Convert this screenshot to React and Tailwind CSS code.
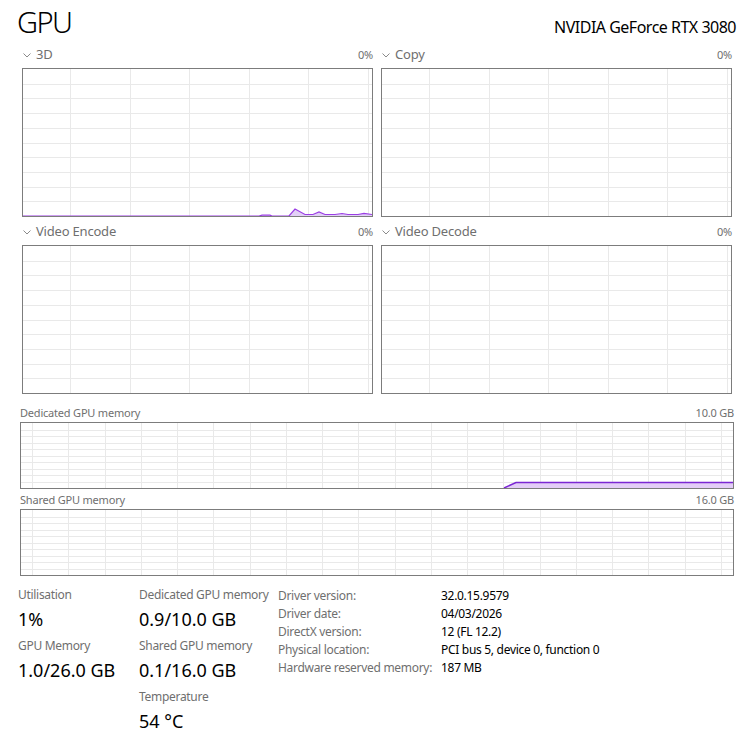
import React from "react";

const threeD = [
  [0, 147], [236, 147], [239, 146.2], [247, 146.2], [249, 147], [266, 147],
  [272, 140], [282, 145.5], [290, 145.5], [296, 143], [302, 145.5], [312, 145.5],
  [319, 144.5], [325, 145.5], [335, 145.5], [341, 144.3], [349, 145.5],
];

function GridLines({ w, h, start, step, rows }) {
  const vs = [];
  for (let x = start; x < w; x += step) vs.push(Math.round(x) + 0.5);
  const hs = [];
  for (let i = 1; i < rows; i++) hs.push(Math.round((h * i) / rows) + 0.5);
  return (
    <g stroke="#e9e9e9" strokeWidth="1">
      {vs.map((x) => (
        <line key={"v" + x} x1={x} y1="0" x2={x} y2={h} />
      ))}
      {hs.map((y) => (
        <line key={"h" + y} x1="0" y1={y} x2={w} y2={y} />
      ))}
    </g>
  );
}

function Chevron() {
  return (
    <svg width="8" height="5" className="ml-[1px] mr-[5px]">
      <polyline points="0.5,0.5 4,4 7.5,0.5" fill="none" stroke="#8a8a8a" strokeWidth="1" />
    </svg>
  );
}

function EngineGraph({ title, points }) {
  const w = 350;
  const h = 147;
  const line = points ? points.map((p) => p.join(",")).join(" ") : null;
  return (
    <div className="flex flex-col">
      <div className="flex items-center h-[18px] text-[13px] tracking-[-0.2px] text-[#6f6f6f]">
        <Chevron />
        <span className="flex-1">{title}</span>
        <span className="text-[11px]">0%</span>
      </div>
      <div className="mt-[4px] h-[149px] border border-[#7c7c7c] overflow-hidden">
        <svg width={w} height={h} className="block">
          <GridLines w={w} h={h} start={47} step={59.6} rows={10} />
          {line && (
            <>
              <polygon points={line + ` ${w},${h} 0,${h}`} fill="#e2d0f6" />
              <polyline points={line} fill="none" stroke="#9b3fe4" strokeWidth="1.2" />
            </>
          )}
        </svg>
      </div>
    </div>
  );
}

function MemoryGraph({ title, max, fill, className }) {
  const w = 712;
  const h = 65;
  return (
    <div className={"flex flex-col " + className}>
      <div className="flex items-center justify-between h-[16px] text-[11px] tracking-[-0.2px] text-[#6f6f6f]">
        <span>{title}</span>
        <span>{max}</span>
      </div>
      <div className="mt-[1px] h-[67px] border border-[#7c7c7c] overflow-hidden">
        <svg width={w} height={h} className="block">
          <GridLines w={w} h={h} start={11} step={36.25} rows={10} />
          {fill && (
            <>
              <polygon points={`483,${h} 495,59.5 ${w},59.5 ${w},${h}`} fill="#e3cdf7" />
              <polyline points={`483,${h} 495,59.5 ${w},59.5`} fill="none" stroke="#7b26d4" strokeWidth="1.5" />
            </>
          )}
        </svg>
      </div>
    </div>
  );
}

function Stat({ label, value, className }) {
  return (
    <div className={className}>
      <div className="h-[16px] text-[12px] leading-[16px] tracking-[-0.3px] text-[#6f6f6f]">{label}</div>
      <div className="mt-[4px] h-[24px] text-[18px] leading-[24px] text-black">{value}</div>
    </div>
  );
}

const info = [
  ["Driver version:", "32.0.15.9579"],
  ["Driver date:", "04/03/2026"],
  ["DirectX version:", "12 (FL 12.2)"],
  ["Physical location:", "PCI bus 5, device 0, function 0"],
  ["Hardware reserved memory:", "187 MB"],
];

export default function App() {
  return (
    <div className="w-[749px] h-[744px] bg-white overflow-hidden font-['Noto_Sans',sans-serif]">
      <div className="flex items-baseline justify-between pl-[17px] pr-[13px] pt-[4px] h-[38px]">
        <span className="text-[29px] leading-[36px] font-light tracking-[-1.5px] text-black">GPU</span>
        <span className="text-[16px] tracking-[-0.5px] text-black">NVIDIA GeForce RTX 3080</span>
      </div>

      <div className="grid grid-cols-2 gap-x-[8px] gap-y-[6px] pl-[22px] pr-[17px] mt-[8px]">
        <EngineGraph title="3D" points={threeD} />
        <EngineGraph title="Copy" />
        <EngineGraph title="Video Encode" />
        <EngineGraph title="Video Decode" />
      </div>

      <div className="pl-[20px] pr-[15px] mt-[11px]">
        <MemoryGraph title="Dedicated GPU memory" max="10.0 GB" fill />
        <MemoryGraph title="Shared GPU memory" max="16.0 GB" className="mt-[3px]" />
      </div>

      <div className="flex pl-[18px] mt-[11px]">
        <div className="w-[121px] flex flex-col gap-[7px]">
          <Stat label="Utilisation" value="1%" />
          <Stat label="GPU Memory" value="1.0/26.0 GB" />
        </div>
        <div className="w-[139px] flex flex-col gap-[7px]">
          <Stat label="Dedicated GPU memory" value="0.9/10.0 GB" />
          <Stat label="Shared GPU memory" value="0.1/16.0 GB" />
          <Stat label="Temperature" value="54 °C" />
        </div>
        <div className="flex flex-col text-[12px] leading-[18px] tracking-[-0.3px]">
          {info.map(([k, v]) => (
            <div key={k} className="flex">
              <span className="w-[163px] text-[#6f6f6f]">{k}</span>
              <span className="text-black">{v}</span>
            </div>
          ))}
        </div>
      </div>
    </div>
  );
}
